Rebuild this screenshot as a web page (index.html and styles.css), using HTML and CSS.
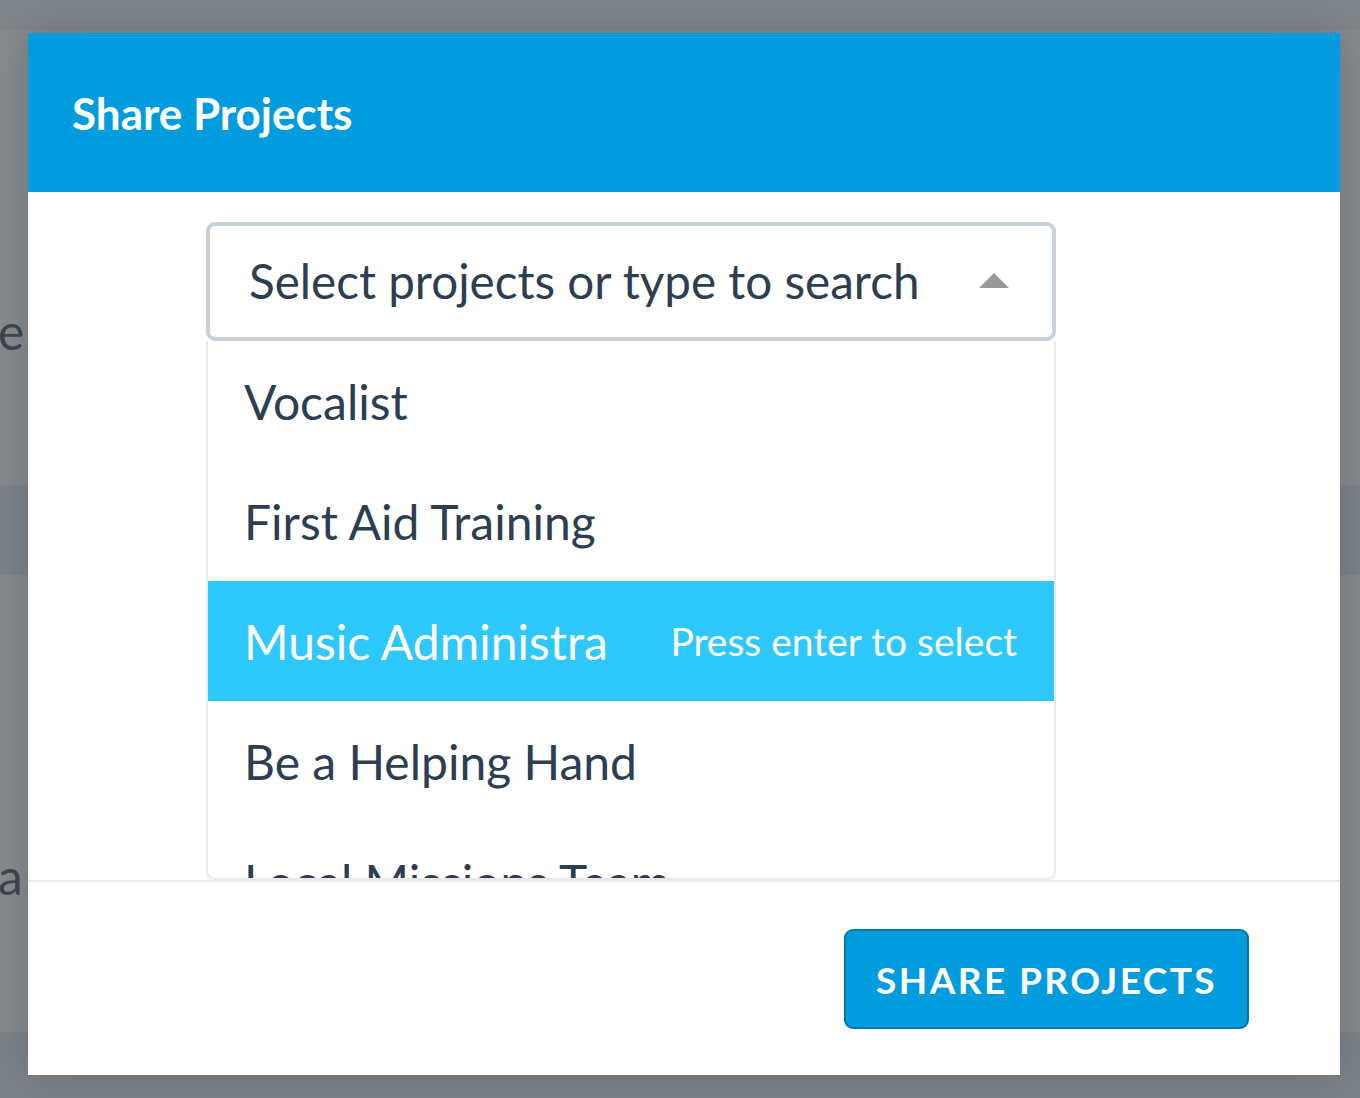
FILE: index.html
```html
<!DOCTYPE html>
<html lang="en">
<head>
<meta charset="utf-8">
<title>Share Projects</title>
<link rel="stylesheet" href="styles.css">
</head>
<body>
<div class="page">
  <div class="page-top"></div>
  <div class="page-row page-row-a"><span class="page-text">e</span></div>
  <div class="page-band"></div>
  <div class="page-row page-row-b"><span class="page-text">a</span></div>
  <div class="page-band page-band-bottom"></div>
</div>
<div class="overlay">
  <div class="modal">
    <div class="modal-header">
      <h1 class="modal-title">Share Projects</h1>
    </div>
    <div class="modal-body">
      <div class="multiselect">
        <div class="ms-select">
          <span class="ms-placeholder">Select projects or type to search</span>
          <span class="ms-caret"></span>
        </div>
        <ul class="ms-list">
          <li class="ms-option"><span class="ms-label">Vocalist</span></li>
          <li class="ms-option"><span class="ms-label">First Aid Training</span></li>
          <li class="ms-option ms-highlight"><span class="ms-label">Music Administration</span><span class="ms-hint">Press enter to select</span></li>
          <li class="ms-option"><span class="ms-label">Be a Helping Hand</span></li>
          <li class="ms-option"><span class="ms-label">Local Missions Team</span></li>
        </ul>
      </div>
    </div>
    <div class="modal-footer">
      <button class="btn-primary" type="button">Share Projects</button>
    </div>
  </div>
</div>
</body>
</html>
```

FILE: styles.css
```css
html, body {
  margin: 0;
  padding: 0;
}
body {
  width: 1360px;
  height: 1098px;
  overflow: hidden;
  position: relative;
  font-family: Lato, "Open Sans", sans-serif;
  background: #878b8e;
}
.page {
  display: flex;
  flex-direction: column;
  height: 1098px;
}
.page-top {
  height: 30px;
  background: #81868a;
}
.page-row {
  display: flex;
  align-items: flex-start;
}
.page-row-a {
  height: 455px;
}
.page-row-a .page-text {
  margin-top: 276px;
}
.page-band {
  height: 90px;
  background: #7d8388;
}
.page-row-b {
  height: 457px;
}
.page-row-b .page-text {
  margin-top: 276px;
}
.page-band-bottom {
  flex: 1;
  height: auto;
}
.page-text {
  font-size: 50px;
  color: #3e4449;
  margin-left: -2px;
  line-height: 1;
}
.overlay {
  position: absolute;
  inset: 0;
}
.modal {
  position: absolute;
  left: 28px;
  top: 33px;
  width: 1312px;
  height: 1042px;
  background: #ffffff;
  display: flex;
  flex-direction: column;
  box-shadow: 0 0 40px rgba(60, 70, 80, 0.35);
}
.modal-header {
  height: 159px;
  background: #009cdd;
  display: flex;
  align-items: center;
  padding-left: 44px;
  box-sizing: border-box;
}
.modal-title {
  margin: 0;
  color: #ffffff;
  font-family: Lato, sans-serif;
  font-weight: 700;
  font-size: 44px;
  letter-spacing: 0;
}
.modal-body {
  height: 688px;
  padding-top: 30px;
  padding-left: 178px;
  box-sizing: border-box;
  overflow: hidden;
}
.multiselect {
  width: 850px;
}
.ms-select {
  height: 119px;
  box-sizing: border-box;
  border: 4px solid #c9d0d6;
  border-radius: 9px;
  display: flex;
  align-items: center;
  padding-left: 39px;
  padding-right: 43px;
  justify-content: space-between;
}
.ms-placeholder {
  font-size: 47.6px;
  color: #2c3e50;
  padding-bottom: 2px;
}
.ms-caret {
  width: 0;
  height: 0;
  border-left: 15px solid transparent;
  border-right: 15px solid transparent;
  border-bottom: 15px solid #999999;
  margin-top: -3px;
}
.ms-list {
  list-style: none;
  margin: 0;
  padding: 0;
  border: 2px solid #e8e8e8;
  border-top: none;
  border-radius: 0 0 9px 9px;
  height: 539px;
  overflow: hidden;
  box-sizing: border-box;
}
.ms-option {
  height: 120px;
  display: flex;
  align-items: center;
  padding-left: 36px;
  padding-right: 37px;
  font-size: 48px;
  color: #2c3e50;
  white-space: nowrap;
}
.ms-label {
  overflow: hidden;
  min-width: 0;
  flex: 1 1 auto;
}
.ms-highlight {
  background: #2ec8fd;
  color: #ffffff;
}
.ms-hint {
  flex: none;
  margin-left: 62px;
  font-size: 39px;
  color: #ffffff;
}
.modal-footer {
  flex: 1;
  border-top: 2px solid #e8e8e8;
  display: flex;
  justify-content: flex-end;
  align-items: flex-start;
  padding-top: 47px;
  padding-right: 91px;
}
.btn-primary {
  width: 405px;
  height: 100px;
  background: #009cdd;
  border: 2px solid #0078aa;
  border-radius: 9px;
  color: #ffffff;
  font-family: Lato, sans-serif;
  font-weight: 700;
  font-size: 37px;
  letter-spacing: 2.4px;
  text-transform: uppercase;
  cursor: pointer;
  padding: 0;
}
```
